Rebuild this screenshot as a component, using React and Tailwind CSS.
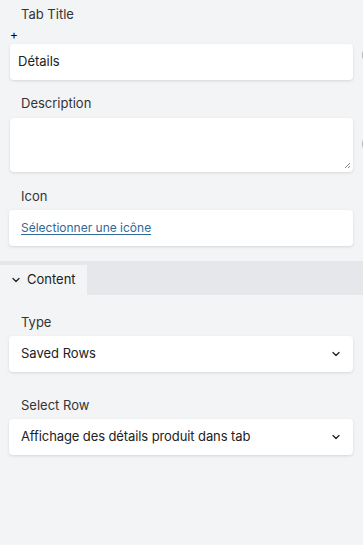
import React from "react";

function Chevron({ className }) {
  return (
    <svg className={className} width="10" height="10" viewBox="0 0 10 10" fill="none">
      <path d="M2 3.5 L5 6.5 L8 3.5" stroke="#222" strokeWidth="1.3" strokeLinecap="round" strokeLinejoin="round" />
    </svg>
  );
}

export default function App() {
  const font = { fontFamily: "Inter, 'Noto Sans', sans-serif" };
  return (
    <div className="w-[363px] h-[545px] bg-[#f3f4f6] overflow-hidden text-[13px] text-[#222]" style={font}>
      <div className="pt-[6px] relative">
        <div className="pl-[21px] h-[16px] leading-[16px] text-[#333]">Tab Title</div>
        <div className="pl-[10px] h-[22px] leading-[22px] text-[12px] text-black pt-[2px]">+</div>
        <div className="relative mx-[10px] h-[36px] bg-white rounded-[4px] shadow-[0_1px_3px_rgba(0,0,0,0.12)] flex items-center pl-[8px]">
          Détails
          <span className="absolute right-[-17px] top-[6px] w-[8px] h-[10px] rounded-full bg-[#b8bbc0]"></span>
        </div>
        <div className="pl-[21px] mt-[15px] h-[16px] leading-[16px] text-[#333]">Description</div>
        <div className="relative mx-[10px] mt-[7px] h-[54px] bg-white rounded-[4px] shadow-[0_1px_3px_rgba(0,0,0,0.12)]">
          <span className="absolute right-[-17px] top-[21px] w-[8px] h-[10px] rounded-full bg-[#b8bbc0]"></span>
          <svg className="absolute right-[2px] bottom-[3px]" width="7" height="7" viewBox="0 0 7 7">
            <path d="M1 6 L6 1 M4 6 L6 4" stroke="#666" strokeWidth="0.8" />
          </svg>
        </div>
        <div className="pl-[21px] mt-[16px] h-[16px] leading-[16px] text-[#333]">Icon</div>
        <div className="ml-[9px] mr-[10px] mt-[6px] h-[36px] bg-white rounded-[4px] shadow-[0_1px_3px_rgba(0,0,0,0.12)] flex items-center pl-[12px]">
          <a href="#" className="text-[12px] text-[#2f6a99] underline underline-offset-2">Sélectionner une icône</a>
        </div>
      </div>
      <div className="mt-[15px] bg-[#e5e7eb] pt-[4px] flex">
        <div className="w-[87px] h-[30px] bg-[#f3f4f6] flex items-center pl-[11px] gap-[6px]">
          <Chevron />
          <span>Content</span>
        </div>
      </div>
      <div className="pl-[21px] mt-[19px] h-[16px] leading-[16px] text-[#333]">Type</div>
      <div className="ml-[9px] mr-[10px] mt-[6px] h-[36px] bg-white rounded-[4px] shadow-[0_1px_3px_rgba(0,0,0,0.12)] flex items-center justify-between pl-[12px] pr-[12px]">
        <span>Saved Rows</span>
        <Chevron />
      </div>
      <div className="pl-[21px] mt-[25px] h-[16px] leading-[16px] text-[#333]">Select Row</div>
      <div className="ml-[9px] mr-[10px] mt-[6px] h-[36px] bg-white rounded-[4px] shadow-[0_1px_3px_rgba(0,0,0,0.12)] flex items-center justify-between pl-[12px] pr-[12px]">
        <span className="tracking-[-0.1px]">Affichage des détails produit dans tab</span>
        <Chevron />
      </div>
    </div>
  );
}
